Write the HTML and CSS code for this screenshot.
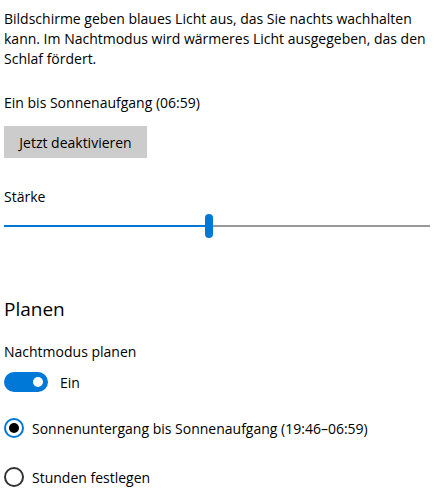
FILE: index.html
```html
<!DOCTYPE html>
<html lang="de">
<head>
    <meta charset="UTF-8">
    <title>Nachtmodus</title>
    <link rel="stylesheet" href="styles.css">
</head>
<body>
    <div class="page">
        <p class="intro">Bildschirme geben blaues Licht aus, das Sie nachts wachhalten kann. Im Nachtmodus wird wärmeres Licht ausgegeben, das den Schlaf fördert.</p>

        <p class="status">Ein bis Sonnenaufgang (06:59)</p>

        <button class="btn">Jetzt deaktivieren</button>

        <div class="strength">
            <div class="label">Stärke</div>
            <div class="slider">
                <div class="slider-fill"></div>
                <div class="slider-thumb"></div>
                <div class="slider-rest"></div>
            </div>
        </div>

        <h2 class="section-title">Planen</h2>

        <div class="label">Nachtmodus planen</div>
        <div class="toggle-row">
            <span class="toggle"><span class="knob"></span></span>
            <span>Ein</span>
        </div>

        <div class="radios">
            <label class="radio checked"><span class="dot"></span>Sonnenuntergang bis Sonnenaufgang (19:46–06:59)</label>
            <label class="radio"><span class="dot"></span>Stunden festlegen</label>
        </div>
    </div>
</body>
</html>
```

FILE: styles.css
```css
* {
    margin: 0;
    padding: 0;
    box-sizing: border-box;
}

body {
    font-family: 'Open Sans', 'Noto Sans', sans-serif;
    font-size: 14px;
    color: #000;
    background: #fff;
}

.page {
    padding: 9px 8px 0 4px;
}

.intro {
    line-height: 20px;
}

.status {
    margin-top: 24px;
    line-height: 20px;
}

.btn {
    display: block;
    margin-top: 13px;
    width: 143px;
    height: 32px;
    background: #ccc;
    border: none;
    font-family: inherit;
    font-size: 14px;
    color: #000;
}

.strength {
    margin-top: 29px;
}

.label {
    line-height: 20px;
}

.slider {
    display: flex;
    align-items: center;
    height: 24px;
    margin-top: 7px;
    width: 426px;
}

.slider-fill {
    width: 201px;
    height: 2px;
    background: #0078d7;
}

.slider-thumb {
    width: 8px;
    height: 24px;
    border-radius: 4px;
    background: #0078d7;
}

.slider-rest {
    flex: 1;
    height: 2px;
    background: #999;
}

.section-title {
    margin-top: 58px;
    font-size: 19px;
    font-weight: 400;
    line-height: 26px;
}

.section-title + .label {
    margin-top: 20px;
}

.toggle-row {
    display: flex;
    align-items: center;
    gap: 12px;
    margin-top: 10px;
    height: 20px;
}

.toggle {
    display: flex;
    align-items: center;
    justify-content: flex-end;
    width: 44px;
    height: 20px;
    border-radius: 10px;
    background: #0078d7;
    padding-right: 5px;
}

.knob {
    width: 10px;
    height: 10px;
    border-radius: 50%;
    background: #fff;
}

.radios {
    display: flex;
    flex-direction: column;
    gap: 29px;
    margin-top: 26px;
}

.radio {
    display: flex;
    align-items: center;
    gap: 8px;
    height: 20px;
}

.dot {
    display: flex;
    align-items: center;
    justify-content: center;
    width: 20px;
    height: 20px;
    border: 2px solid #333;
    border-radius: 50%;
}

.radio.checked .dot {
    border-color: #0078d7;
}

.radio.checked .dot::after {
    content: '';
    width: 10px;
    height: 10px;
    border-radius: 50%;
    background: #000;
}
```
